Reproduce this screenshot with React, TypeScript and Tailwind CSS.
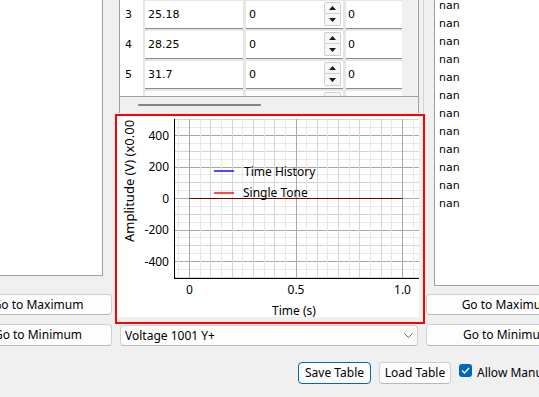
import React from "react";

const rows = [
  { n: "3", v: "25.18" },
  { n: "4", v: "28.25" },
  { n: "5", v: "31.7" },
  { n: "6", v: "" },
];

const Spin = () => (
  <div className="ml-auto mr-[2px] mt-[1px] flex h-[24px] w-[17px] flex-col">
    <div className="flex h-[12px] items-center justify-center rounded-t-[2px] border border-[#d0d0d0] bg-[#f7f7f7]">
      <svg width="7" height="4" viewBox="0 0 7 4">
        <path d="M3.5 0L7 4H0z" fill="#1a1a1a" />
      </svg>
    </div>
    <div className="flex h-[12px] items-center justify-center rounded-b-[2px] border border-t-0 border-[#d0d0d0] bg-[#f7f7f7]">
      <svg width="7" height="4" viewBox="0 0 7 4">
        <path d="M0 0H7L3.5 4z" fill="#1a1a1a" />
      </svg>
    </div>
  </div>
);

const vy = (v: number) => 82 - v * 0.1575;
const tx = (t: number) => 72.5 + t * 213;

const Chart = () => {
  const hLines = [];
  for (let i = -10; i <= 10; i++) {
    const y = Math.round(vy(i * 50)) + 0.5;
    const c = i % 4 === 0 ? "#a8a8a8" : i % 2 === 0 ? "#d4d4d4" : "#e8e8e8";
    hLines.push(<line key={"h" + i} x1={58} x2={302} y1={y} y2={y} stroke={c} />);
  }
  const vLines = [];
  for (let j = -1; j <= 21; j++) {
    const x = Math.floor(tx(j * 0.05)) + 0.5;
    const c = j % 10 === 0 ? "#a8a8a8" : j % 2 === 0 ? "#d4d4d4" : "#e8e8e8";
    vLines.push(<line key={"v" + j} x1={x} x2={x} y1={3} y2={162} stroke={c} />);
  }
  const yTicks = [400, 200, 0, -200, -400];
  const xTicks = [
    { t: 0, l: "0" },
    { t: 0.5, l: "0.5" },
    { t: 1, l: "1.0" },
  ];
  return (
    <svg width="306" height="206" viewBox="0 0 306 206" fontFamily="'Noto Sans', 'Liberation Sans', sans-serif" fontSize="12">
      <defs>
        <clipPath id="lab">
          <rect x="0" y="3" width="40" height="200" />
        </clipPath>
      </defs>
      <rect x="0" y="0" width="306" height="206" fill="#f0f0f0" />
      <rect x="0" y="0" width="302" height="201" fill="#ffffff" />
      {hLines}
      {vLines}
      <line x1={57.5} x2={57.5} y1={3} y2={163} stroke="#000" />
      <line x1={57.5} x2={302} y1={162.5} y2={162.5} stroke="#000" />
      <line x1={tx(0)} x2={tx(1)} y1={82.5} y2={82.5} stroke="#7a0000" strokeWidth="1.2" />
      <line x1={97} x2={117} y1={55} y2={55} stroke="#0000ff" strokeWidth="1.4" />
      <text x={127} y={59.5} fill="#000">Time History</text>
      <line x1={97} x2={117} y1={77} y2={77} stroke="#ff0000" strokeWidth="1.4" />
      <text x={126} y={80.5} fill="#000">Single Tone</text>
      {yTicks.map((v) => (
        <text key={v} x={52} y={vy(v) + 4.5} textAnchor="end" fill="#000">
          {v}
        </text>
      ))}
      {xTicks.map((x) => (
        <text key={x.l} x={tx(x.t)} y={177.5} textAnchor="middle" fill="#000">
          {x.l}
        </text>
      ))}
      <text x={177} y={198.5} textAnchor="middle" fill="#000">
        Time (s)
      </text>
      <g clipPath="url(#lab)">
        <text transform="translate(17,126) rotate(-90)" fontSize="13" fill="#000">
          Amplitude (V) (x0.001)
        </text>
      </g>
    </svg>
  );
};

const Btn = ({ label, h, className = "" }: { label: string; h: string; className?: string }) => (
  <div className={`flex ${h} items-center justify-center rounded-[4px] border border-[#d0d0d0] border-b-[#b8b8b8] bg-[#fdfdfd] text-[12px] ${className}`}>
    {label}
  </div>
);

const App: React.FC = () => {
  return (
    <div className="h-[397px] w-[539px] overflow-hidden bg-[#f0f0f0] font-['Noto_Sans','Liberation_Sans',sans-serif] text-[12px] text-black">
      <div className="flex h-[346px]">
        {/* left column */}
        <div className="-ml-[36px] flex w-[148px] shrink-0 flex-col">
          <div className="h-[276px] w-[139px] border-b border-r border-[#a0a0a0] bg-white" />
          <Btn label="Go to Maximum" h="h-[21px]" className="mt-[18px] w-[148px]" />
          <Btn label="Go to Minimum" h="h-[22px]" className="mt-[9px] w-[148px]" />
        </div>

        {/* middle column */}
        <div className="ml-[3px] flex w-[310px] shrink-0 flex-col">
          <div className="flex h-[115px]">
            <div className="ml-[4px] flex h-[113px] w-[300px] flex-col border-x border-[#a0a0a0]">
              <div className="flex h-[97px] overflow-hidden border-b border-[#a0a0a0]">
                <div className="flex w-[282px] flex-col bg-white font-['DejaVu_Sans',sans-serif] text-[11px]">
                  {rows.map((r) => (
                    <div key={r.n} className="flex h-[30px] shrink-0">
                      <div className="w-[23px] bg-white pl-[5px] pt-[7px]">{r.n}</div>
                      <div className="flex flex-1 gap-[3px] bg-[#e6e6e6] py-[1px] pl-[2px]">
                        <div className="flex h-[28px] w-[98px] items-center border-b border-[#8c8c8c] bg-white pl-[3px] pt-[1px]">
                          {r.v}
                        </div>
                        <div className="flex h-[28px] w-[97px] border-b border-[#8c8c8c] bg-white">
                          <span className="self-center pl-[3px] pt-[1px]">{r.v ? "0" : ""}</span>
                          <Spin />
                        </div>
                        <div className="flex h-[28px] w-[56px] items-center border-b border-[#8c8c8c] bg-white pl-[2px] pt-[1px]">
                          {r.v ? "0" : ""}
                        </div>
                      </div>
                    </div>
                  ))}
                </div>
                <div className="w-[16px] bg-[#f0f0f0]" />
              </div>
              <div className="h-[15px] bg-[#f0f0f0] pt-[7px]">
                <div className="ml-[18px] h-[2px] w-[123px] rounded-full bg-[#858585]" />
              </div>
            </div>
            <div className="ml-[4px] h-[113px] w-[1px] bg-[#d4d4d4]" />
          </div>

          <div className="h-[210px] w-[310px] border-2 border-[#ff0000]">
            <Chart />
          </div>

          <div className="ml-[5px] mt-[1px] flex h-[21px] w-[298px] items-center rounded-[4px] border border-[#d0d0d0] border-b-[#b8b8b8] bg-[#fdfdfd] pl-[4px]">
            <span>Voltage 1001 Y+</span>
            <svg className="ml-auto mr-[4px]" width="9" height="5" viewBox="0 0 9 5">
              <path d="M0.5 0.5L4.5 4.5L8.5 0.5" fill="none" stroke="#5f5f5f" strokeWidth="1" />
            </svg>
          </div>
        </div>

        {/* right column */}
        <div className="ml-[1px] flex w-[163px] shrink-0 flex-col">
          <div className="flex h-[286px] pl-[8px]">
            <div className="flex-1 overflow-hidden border-b border-l border-[#a0a0a0] bg-white pl-[4px] font-['DejaVu_Sans',sans-serif] text-[11px]">
              <div className="-mt-[3px]">
                {Array.from({ length: 12 }).map((_, i) => (
                  <div key={i} className="h-[18px] leading-[18px]">
                    nan
                  </div>
                ))}
              </div>
            </div>
          </div>
          <Btn label="Go to Maximum" h="h-[21px]" className="mt-[8px] w-[162px]" />
          <Btn label="Go to Minimum" h="h-[22px]" className="mt-[9px] w-[162px]" />
        </div>
      </div>

      {/* bottom row */}
      <div className="mt-[16px] flex h-[22px] items-center whitespace-nowrap pl-[298px]">
        <div className="flex h-[22px] w-[73px] shrink-0 items-center justify-center rounded-[4px] border border-[#0067c0] bg-[#fdfdfd]">
          Save Table
        </div>
        <Btn label="Load Table" h="h-[22px]" className="ml-[8px] w-[72px] shrink-0" />
        <div className="ml-[8px] mt-[2px] flex h-[13px] w-[13px] shrink-0 items-center justify-center self-start rounded-[3px] bg-[#0067c0]">
          <svg width="9" height="7" viewBox="0 0 9 7">
            <path d="M1 3.5L3.5 6L8 1" fill="none" stroke="#ffffff" strokeWidth="1.3" />
          </svg>
        </div>
        <span className="ml-[5px]">Allow Manual Edit</span>
      </div>
    </div>
  );
};

export default App;
